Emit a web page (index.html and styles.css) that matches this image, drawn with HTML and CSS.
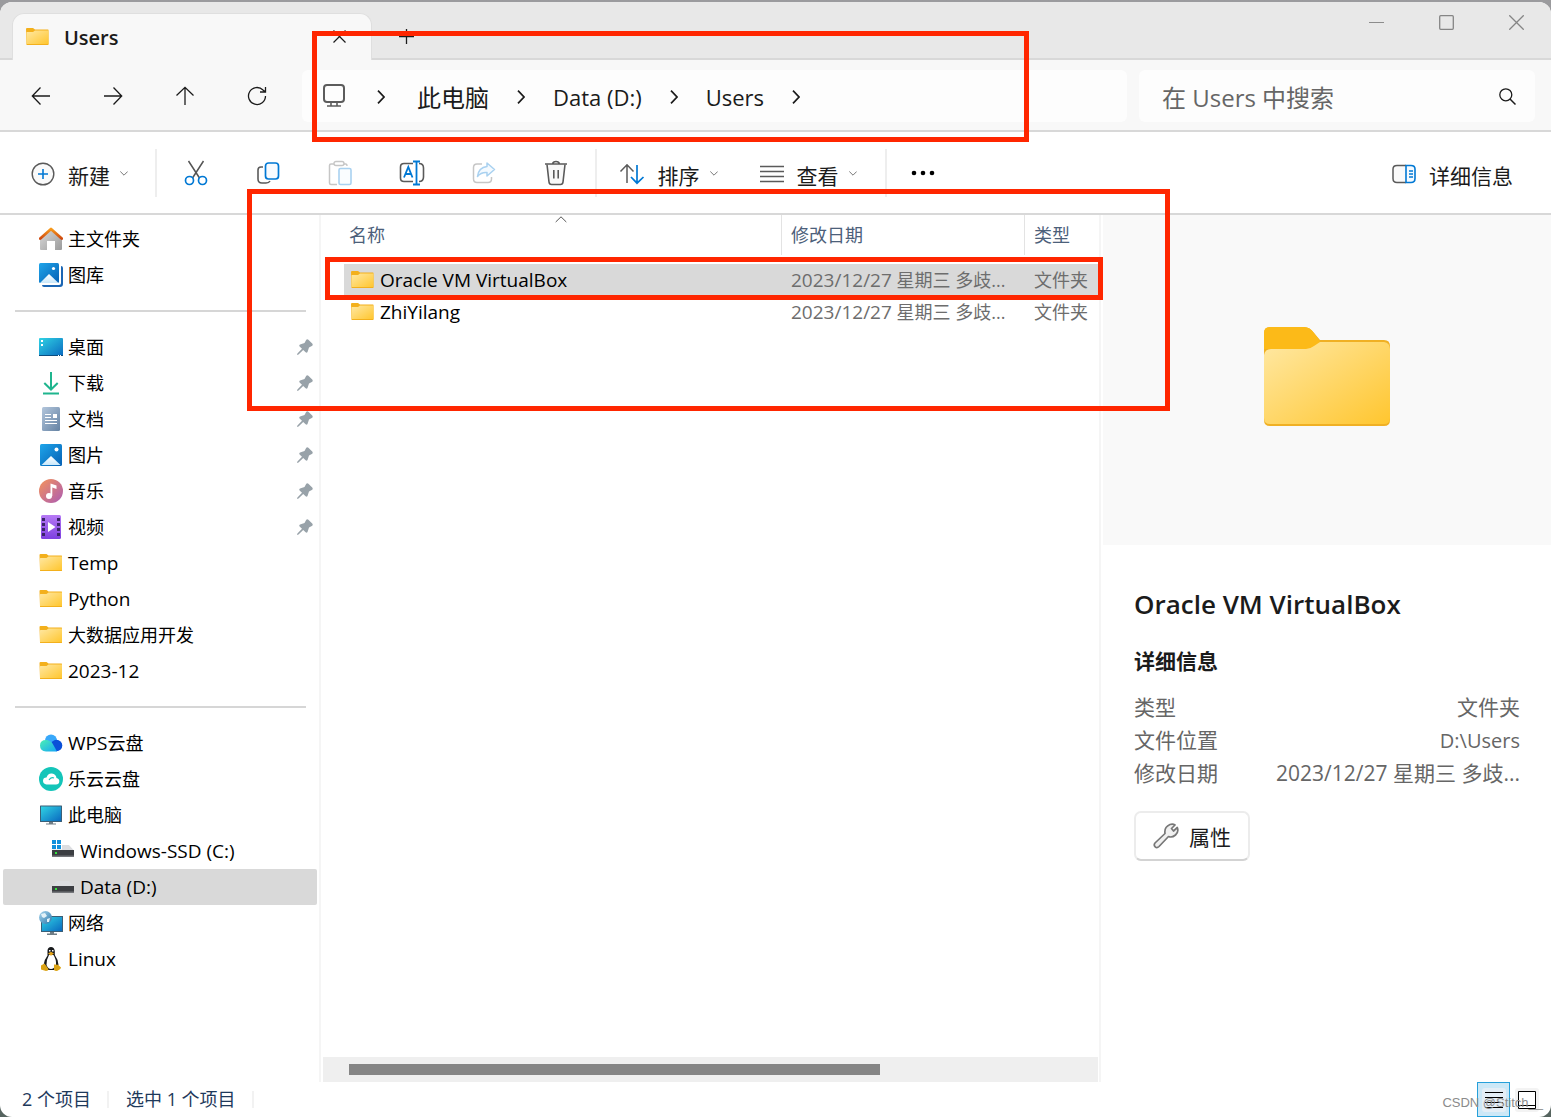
FILE: index.html
```html
<!DOCTYPE html>
<html lang="zh-CN">
<head>
<meta charset="utf-8">
<meta name="viewport" content="width=device-width, initial-scale=1">
<title>Users</title>
<link rel="stylesheet" href="styles.css">
</head>
<body>
<svg class="defs" width="0" height="0" aria-hidden="true">
  <defs>
    <linearGradient id="g-folder" x1="0" y1="0" x2="1" y2="1"><stop offset="0" stop-color="#ffe8a3"/><stop offset="1" stop-color="#ffc62f"/></linearGradient>
    <linearGradient id="g-blue" x1="0" y1="0" x2="1" y2="1"><stop offset="0" stop-color="#1fa5ea"/><stop offset="1" stop-color="#0560b4"/></linearGradient>
    <linearGradient id="g-screen" x1="0" y1="0" x2="1" y2="1"><stop offset="0" stop-color="#30d3e4"/><stop offset="1" stop-color="#0a6ac0"/></linearGradient>
    <linearGradient id="g-snow" x1="0" y1="0" x2="0" y2="1"><stop offset="0" stop-color="#fff"/><stop offset="1" stop-color="#c9e8fb"/></linearGradient>
    <linearGradient id="g-wall" x1="0" y1="0" x2="1" y2="1"><stop offset="0" stop-color="#dcdcdc"/><stop offset="1" stop-color="#9b9b9b"/></linearGradient>
    <linearGradient id="g-roof" x1="0" y1="0" x2="0" y2="1"><stop offset="0" stop-color="#f79a1c"/><stop offset="1" stop-color="#cf4a10"/></linearGradient>
    <linearGradient id="g-doc" x1="0" y1="0" x2="1" y2="1"><stop offset="0" stop-color="#b3c6dc"/><stop offset="1" stop-color="#6482a3"/></linearGradient>
    <linearGradient id="g-music" x1="0" y1="0" x2="1" y2="1"><stop offset="0" stop-color="#f5945a"/><stop offset="1" stop-color="#ab5bb4"/></linearGradient>
    <linearGradient id="g-video" x1="0" y1="0" x2="0" y2="1"><stop offset="0" stop-color="#b67af5"/><stop offset="1" stop-color="#7d3fe0"/></linearGradient>
    <linearGradient id="g-cloud" x1="0" y1="0" x2="1" y2="1"><stop offset="0" stop-color="#4bf0b4"/><stop offset="1" stop-color="#16a6f5"/></linearGradient>
    <linearGradient id="g-globe" x1="0" y1="0" x2="1" y2="1"><stop offset="0" stop-color="#a9d6ee"/><stop offset="1" stop-color="#2b78ab"/></linearGradient>
  </defs>
  <symbol id="folder" viewBox="0 0 23 17">
    <path d="M0 1Q0 0 1 0H7L9 1.500H22Q22.500 1.500 22.500 2V16.500Q22.500 17 22 17H1Q.5 17 .5 16.500Z" fill="#f3b01c"/>
    <path d="M.5 4.500Q.5 4 1 4H7L9 2.500H22.500V16H.5Z" fill="url(#g-folder)"/>
  </symbol>
  <symbol id="chev-right" viewBox="0 0 8 14"><path d="M1 .7 7 7 1 13.300" fill="none" stroke="#1b1b1b" stroke-width="1.700"/></symbol>
  <symbol id="chev-down" viewBox="0 0 8 5"><path d="M.3.5 4 4.200 7.700.5" fill="none" stroke="#777"/></symbol>
  <symbol id="pin" viewBox="0 0 16 16"><path d="M9 1.200Q10-.4 11.400.8L15.200 4.600Q16.400 6 14.800 7L12 8.500 10.500 13Q9.800 14.200 8.600 13.200L6.200 10.900 1.500 15.500 0 16 .4 14.400 5 9.700 2.600 7.400Q1.800 6.200 3 5.500L7.500 4Z" fill="#98a2a9"/></symbol>
  <symbol id="disk" viewBox="0 0 24 24">
    <path d="M6 6H18L22.500 11H1Z" fill="#dcdde0"/><path d="M1 11H23V17H1Z" fill="#3c3e42"/><path d="M1 16.500H23V18H1Z" fill="#75777b"/><path d="M4 13H6V15H4Z" fill="#32e43c"/>
  </symbol>
</svg>

<div class="window">
  <header class="titlebar">
    <div class="tab">
      <svg class="tab-icon" width="23" height="17"><use href="#folder"/></svg>
      <span class="tab-title">Users</span>
      <button class="tab-close" aria-label="关闭标签页"><svg width="13" height="13" viewBox="0 0 13 13"><path d="M.5.5 12.500 12.500M12.500.5.5 12.500" stroke="#1b1b1b" stroke-width="1.200"/></svg></button>
    </div>
    <button class="tab-new" aria-label="新建标签页"><svg width="15" height="15" viewBox="0 0 15 15"><path d="M7.500 0V15M0 7.500H15" stroke="#1b1b1b" stroke-width="1.300"/></svg></button>
    <div class="window-controls">
      <button aria-label="最小化"><svg width="15" height="15" viewBox="0 0 15 15"><path d="M0 7.500H15" stroke="#8c8c8c"/></svg></button>
      <button aria-label="最大化"><svg width="15" height="15" viewBox="0 0 15 15"><rect x=".7" y=".7" width="13.600" height="13.600" rx="1" fill="none" stroke="#858585" stroke-width="1.300"/></svg></button>
      <button aria-label="关闭"><svg width="15" height="15" viewBox="0 0 15 15"><path d="M.3.3 14.700 14.700M14.700.3.3 14.700" stroke="#858585" stroke-width="1.300"/></svg></button>
    </div>
  </header>

  <nav class="navbar">
    <div class="nav-buttons">
      <button aria-label="后退"><svg width="20" height="20" viewBox="0 0 20 20"><path d="M19 10H1.500M9.500 1.500 1.300 10 9.500 18.500"/></svg></button>
      <button aria-label="前进"><svg width="20" height="20" viewBox="0 0 20 20"><path d="M1 10H18.500M10.500 1.500 18.700 10 10.500 18.500"/></svg></button>
      <button aria-label="向上"><svg width="20" height="20" viewBox="0 0 20 20"><path d="M10 19V1.500M1.500 9.500 10 1.300 18.500 9.500"/></svg></button>
      <button aria-label="刷新"><svg width="20" height="20" viewBox="0 0 20 20"><path d="M18.500 10A8.500 8.500 0 1 1 16 4L18.500 6M18.500 1V6H13"/></svg></button>
    </div>
    <div class="address">
      <svg width="22" height="24" viewBox="0 0 22 24"><rect x="1" y="1" width="20" height="17" rx="3" fill="none" stroke="#5c5c5c" stroke-width="2"/><path d="M8 18V22M14 18V22M4 22H18" stroke="#5c5c5c" stroke-width="1.600"/></svg>
      <svg class="root-chevron" width="8" height="14"><use href="#chev-right"/></svg>
      <a href="#">此电脑</a>
      <svg class="chevron" width="8" height="14"><use href="#chev-right"/></svg>
      <a href="#" class="latin">Data (D:)</a>
      <svg class="chevron" width="8" height="14"><use href="#chev-right"/></svg>
      <a href="#" class="latin">Users</a>
      <svg class="chevron" width="8" height="14"><use href="#chev-right"/></svg>
    </div>
    <div class="search">
      <input type="text" aria-label="搜索" placeholder="在 Users 中搜索">
      <svg width="17" height="17" viewBox="0 0 17 17"><circle cx="6.800" cy="6.800" r="6" fill="none" stroke="#1b1b1b" stroke-width="1.300"/><path d="M11 11 16.500 16.500" stroke="#1b1b1b" stroke-width="1.500"/></svg>
    </div>
  </nav>

  <div class="toolbar">
    <button class="tool new">
      <svg width="24" height="24" viewBox="0 0 24 24"><circle cx="12" cy="12" r="10.800" fill="#fafafa" stroke="#5a5a5a" stroke-width="1.400"/><path d="M12 7V17M7 12H17" stroke="#0078d4" stroke-width="1.600"/></svg>
      <span>新建</span><svg class="caret" width="8" height="5"><use href="#chev-down"/></svg>
    </button>
    <div class="sep"></div>
    <div class="tool-icons">
      <button aria-label="剪切"><svg width="24" height="26" viewBox="0 0 24 26"><path d="M4.500 1 15.500 18M19.500 1 8.500 18" stroke="#555" stroke-width="1.500"/><circle cx="5.500" cy="20.500" r="4" fill="#fff" stroke="#0078d4" stroke-width="1.700"/><circle cx="18.500" cy="20.500" r="4" fill="#fff" stroke="#0078d4" stroke-width="1.700"/></svg></button>
      <button aria-label="复制"><svg width="24" height="24" viewBox="0 0 24 24"><path d="M7 6H5Q2 6 2 9V18Q2 22 6 22H10Q13 22 14 20" fill="none" stroke="#5a5a5a" stroke-width="1.600"/><rect x="9.500" y="2" width="13" height="16" rx="3" fill="#f8fbff" stroke="#0078d4" stroke-width="1.700"/></svg></button>
      <button aria-label="粘贴" disabled><svg width="24" height="26" viewBox="0 0 24 26"><path d="M6 4H3Q1.500 4 1.500 5.500V23Q1.500 24.500 3 24.500H9M16 4H18Q19 4 19 6" fill="none" stroke="#c6c6c6" stroke-width="1.500"/><rect x="6" y="1.500" width="10" height="4" rx="2" fill="#fff" stroke="#c6c6c6" stroke-width="1.400"/><rect x="11" y="8.500" width="12" height="16" rx="1.500" fill="#fafdff" stroke="#a9d1f0" stroke-width="1.600"/></svg></button>
      <button aria-label="重命名"><svg width="26" height="26" viewBox="0 0 26 26"><path d="M14 3.500H5Q1.500 3.500 1.500 7V18Q1.500 21.500 5 21.500H14M20 3.500Q24.500 3.500 24.500 8V17Q24.500 21.500 20 21.500" fill="none" stroke="#5a5a5a" stroke-width="1.600"/><path d="M5 17.500 9.300 7 13.500 17.500M6.500 14H12M17.500 1.500V24.500M14 1.500H21M14 24.500H21" fill="none" stroke="#0078d4" stroke-width="1.800"/></svg></button>
      <button aria-label="共享" disabled><svg width="24" height="24" viewBox="0 0 24 24"><path d="M10 3H5Q1.500 3 1.500 6.500V18Q1.500 21.500 5 21.500H16Q19.500 21.500 19.500 18V16" fill="none" stroke="#c6c6c6" stroke-width="1.500"/><path d="M15 2 22.500 8.500 15 15V11.500Q9 11 5.500 15.500 6.500 6.500 15 5.500Z" fill="#f4faff" stroke="#a9d1f0" stroke-width="1.500" stroke-linejoin="round"/></svg></button>
      <button aria-label="删除"><svg width="24" height="26" viewBox="0 0 24 26"><path d="M3 4.500 5 22Q5.300 24.500 7.500 24.500H16.500Q18.700 24.500 19 22L21 4.500" fill="#f8f8f8" stroke="#5a5a5a" stroke-width="1.600"/><path d="M1 4H23M8.500 4Q9 1.500 12 1.500T15.500 4M9.800 10V18.500M14.200 10V18.500" fill="none" stroke="#5a5a5a" stroke-width="1.600"/></svg></button>
    </div>
    <div class="sep"></div>
    <button class="tool menu">
      <svg width="26" height="22" viewBox="0 0 26 22"><path d="M8 20V2M1.500 8.500 8 1.800 14.500 8.500" fill="none" stroke="#5a5a5a" stroke-width="1.500"/><path d="M18 2V20M12 14 18 20.200 24.500 14" fill="none" stroke="#0078d4" stroke-width="1.700"/></svg>
      <span>排序</span><svg class="caret" width="8" height="5"><use href="#chev-down"/></svg>
    </button>
    <button class="tool menu">
      <svg width="24" height="18" viewBox="0 0 24 18"><path d="M0 1.500H24M0 6.500H24M0 11.500H24M0 16.500H24" stroke="#5a5a5a" stroke-width="1.500"/></svg>
      <span>查看</span><svg class="caret" width="8" height="5"><use href="#chev-down"/></svg>
    </button>
    <div class="sep"></div>
    <button class="more" aria-label="查看更多"><svg width="24" height="6" viewBox="0 0 24 6"><circle cx="3" cy="3" r="2.300"/><circle cx="12" cy="3" r="2.300"/><circle cx="21" cy="3" r="2.300"/></svg></button>
    <button class="tool details-toggle">
      <svg width="24" height="20" viewBox="0 0 24 20"><path d="M14 1.500H5Q1 1.500 1 5V14.500Q1 18.500 5 18.500H14" fill="#fafafa" stroke="#5a5a5a" stroke-width="1.500"/><path d="M14 1.500H19Q23 1.500 23 5V14.500Q23 18.500 19 18.500H14ZM17 7H21M17 10H21M17 13H21" fill="#f4faff" stroke="#0078d4" stroke-width="1.600"/></svg>
      <span>详细信息</span>
    </button>
  </div>

  <main class="main">
    <aside class="sidebar">
      <a class="side-item" href="#"><svg width="24" height="24" viewBox="0 0 24 24"><path d="M1 11 12 1.500 23 11V22Q23 23 22 23H16V14H8V23H2Q1 23 1 22Z" fill="url(#g-wall)"/><path d="M1.300 11.500 12 2 22.700 11.500" fill="none" stroke="url(#g-roof)" stroke-width="2.800" stroke-linecap="round" stroke-linejoin="round"/></svg><span>主文件夹</span></a>
      <a class="side-item" href="#"><svg width="24" height="24" viewBox="0 0 24 24"><path d="M22 3Q24 3 24 5V21Q24 24 21 24H5Q3 24 3 22H20Q22 22 22 20Z" fill="#1b66b4"/><rect width="20" height="20" y="0" rx="1.500" fill="url(#g-blue)"/><path d="M1 20 10 11 19.500 20Z" fill="url(#g-snow)"/><circle cx="14.500" cy="5.500" r="1.600" fill="#fff"/></svg><span>图库</span></a>
      <div class="side-divider"></div>
      <a class="side-item" href="#"><svg width="24" height="24" viewBox="0 0 24 24"><rect y="3" width="24" height="18" rx="1" fill="url(#g-screen)"/><path d="M0 20H24V21H0Z" fill="#0b4d80"/><path d="M2 5H4V7H2ZM2 9H4V11H2ZM19 20H20V21H19ZM21 20H22V21H21Z" fill="#fff"/></svg><span>桌面</span><svg class="pin" width="16" height="16"><use href="#pin"/></svg></a>
      <a class="side-item" href="#"><svg width="24" height="24" viewBox="0 0 24 24"><path d="M12 1V18M5.300 12 12 18.500 18.700 12M4 22.500H20" fill="none" stroke="#1fb58e" stroke-width="2"/></svg><span>下载</span><svg class="pin" width="16" height="16"><use href="#pin"/></svg></a>
      <a class="side-item" href="#"><svg width="24" height="24" viewBox="0 0 24 24"><rect x="3" width="18" height="24" rx="1.500" fill="url(#g-doc)"/><path d="M6 7.500H12M6 10.500H12M6 13.500H18M6 16.500H18" stroke="#fff"/><path d="M14 7H18V11H14Z" fill="#fff"/></svg><span>文档</span><svg class="pin" width="16" height="16"><use href="#pin"/></svg></a>
      <a class="side-item" href="#"><svg width="24" height="24" viewBox="0 0 24 24"><rect x="1" y="1" width="22" height="22" rx="1.500" fill="url(#g-blue)"/><path d="M2.500 22 12 13 21.500 22Z" fill="url(#g-snow)"/><circle cx="17.500" cy="6.500" r="2" fill="#fff"/></svg><span>图片</span><svg class="pin" width="16" height="16"><use href="#pin"/></svg></a>
      <a class="side-item" href="#"><svg width="24" height="24" viewBox="0 0 24 24"><circle cx="12" cy="12" r="12" fill="url(#g-music)"/><circle cx="10" cy="17" r="3" fill="#fff"/><path d="M11.500 17V4.500L17.500 6.500V10L13.300 8.600V17Z" fill="#fff"/></svg><span>音乐</span><svg class="pin" width="16" height="16"><use href="#pin"/></svg></a>
      <a class="side-item" href="#"><svg width="24" height="24" viewBox="0 0 24 24"><rect x="2" width="20" height="24" rx="1.500" fill="url(#g-video)"/><path d="M4.500 3V22M19.500 3V22" stroke="#3b2469" stroke-width="3" stroke-dasharray="3 2"/><path d="M9 7 16.500 12 9 17Z" fill="#fff"/></svg><span>视频</span><svg class="pin" width="16" height="16"><use href="#pin"/></svg></a>
      <a class="side-item" href="#"><svg class="side-folder" width="24" height="17"><use href="#folder"/></svg><span class="latin">Temp</span></a>
      <a class="side-item" href="#"><svg class="side-folder" width="24" height="17"><use href="#folder"/></svg><span class="latin">Python</span></a>
      <a class="side-item" href="#"><svg class="side-folder" width="24" height="17"><use href="#folder"/></svg><span>大数据应用开发</span></a>
      <a class="side-item" href="#"><svg class="side-folder" width="24" height="17"><use href="#folder"/></svg><span class="latin">2023-12</span></a>
      <div class="side-divider"></div>
      <a class="side-item" href="#"><svg width="24" height="24" viewBox="0 0 24 24"><circle cx="12" cy="9.500" r="6" fill="#38a8fa"/><circle cx="17.500" cy="14.500" r="5.800" fill="#0a50d8"/><path d="M7 20.500Q1 20 1 14.500T7 9Q11 9 13.500 12.500L18 20.500Z" fill="url(#g-cloud)"/></svg><span><span class="latin">WPS</span>云盘</span></a>
      <a class="side-item" href="#"><svg width="24" height="24" viewBox="0 0 24 24"><circle cx="12" cy="12" r="12" fill="#14c5b9"/><path d="M7.500 17.500Q4 17 4 13.800T7.500 10.500Q9 6 13 6.500T17.500 11Q20.500 11.500 20.300 14.500T17 17.500Z" fill="#fff"/><path d="M10 13Q12 9.500 15 11" fill="none" stroke="#14c5b9" stroke-width="1.200"/></svg><span>乐云云盘</span></a>
      <a class="side-item" href="#"><svg width="24" height="24" viewBox="0 0 24 24"><rect x="1" y="2.500" width="22" height="16.500" rx=".5" fill="#3b5f77"/><rect x="2" y="3.500" width="20" height="14.500" fill="url(#g-screen)"/><path d="M10 19H14V20.500H17V21.500H7V20.500H10Z" fill="#6f7d86"/></svg><span>此电脑</span></a>
      <a class="side-item nested" href="#"><svg width="24" height="24" viewBox="0 0 24 24"><use href="#disk"/><path d="M0 0H11V10.500H0Z" fill="#fff"/><path d="M1 1H5V5H1ZM6 1H10V5H6ZM1 6H5V10H1ZM6 6H10V10H6Z" fill="#1190dc"/></svg><span class="latin">Windows-SSD (C:)</span></a>
      <a class="side-item nested selected" href="#"><svg width="24" height="24"><use href="#disk"/></svg><span class="latin">Data (D:)</span></a>
      <a class="side-item" href="#"><svg width="24" height="24" viewBox="0 0 24 24"><rect x="2" y="5" width="22" height="16" fill="#3b5f77"/><rect x="3" y="6" width="20" height="14" fill="url(#g-screen)"/><path d="M11 21H15V22.500H18V24H8V22.500H11Z" fill="#6f7d86"/><circle cx="6.500" cy="6.500" r="6.500" fill="url(#g-globe)"/><path d="M2 3 6 2 8 5 5 7 3 6ZM8 8 11 7 10 11 8 11Z" fill="#e3f2f8"/></svg><span>网络</span></a>
      <a class="side-item" href="#"><svg width="24" height="24" viewBox="0 0 24 24"><path d="M8.500 3.500Q8.800 0 12 0T15.800 4V8Q19.500 13 19.500 18L17 23H7L4.500 18Q5 13 8.500 8.500Z" fill="#17191c"/><path d="M10 8H14.500Q17.500 13 17 17.500 15 22 12 22T7.500 18Q7.200 13 10 8Z" fill="#fff"/><path d="M9 6.500 12 4.800 15 6.500 12 8.800Z" fill="#e5a419"/><path d="M2 22.500V18.500L5.500 16.500 9.500 22Q9.500 24 7 24ZM15 23V17.500L19 17.800 22 20.500Q22 22 18 24Q15.500 24 15 23Z" fill="#dba315"/><path d="M10 3H11.500V4.500H10ZM13 3H14.500V4.500H13Z" fill="#fff"/></svg><span class="latin">Linux</span></a>
    </aside>

    <section class="files">
      <table class="file-table">
        <thead>
          <tr>
            <th class="col-name">名称<svg class="sort-mark" width="12" height="7" viewBox="0 0 12 7"><path d="M.7 6 6 .8 11.300 6" fill="none" stroke="#555"/></svg></th>
            <th class="col-date">修改日期</th>
            <th class="col-type">类型</th>
          </tr>
        </thead>
        <tbody>
          <tr class="selected">
            <td><div class="file-name"><svg width="23" height="17"><use href="#folder"/></svg><span class="latin">Oracle VM VirtualBox</span></div></td>
            <td><span class="latin">2023/12/27</span> 星期三 多歧...</td>
            <td>文件夹</td>
          </tr>
          <tr>
            <td><div class="file-name"><svg width="23" height="17"><use href="#folder"/></svg><span class="latin">ZhiYilang</span></div></td>
            <td><span class="latin">2023/12/27</span> 星期三 多歧...</td>
            <td>文件夹</td>
          </tr>
        </tbody>
      </table>
      <div class="scrollbar"><div class="thumb"></div></div>
    </section>

    <aside class="details">
      <div class="preview">
        <svg width="126" height="99" viewBox="0 0 126 99"><path d="M0 6Q0 0 6 0H40Q46 0 50 6L56 13H120Q126 13 126 19V93Q126 99 120 99H6Q0 99 0 93Z" fill="#f0b024"/><path d="M0 6Q0 0 6 0H40Q46 0 50 6L56 14 50 22H0Z" fill="#fcba18"/><path d="M0 28Q1 22 7 22H42Q46 22 50 19L56 15H120Q126 16 126 22V91Q126 97 120 97H6Q0 97 0 91Z" fill="url(#g-folder)"/></svg>
      </div>
      <div class="details-body">
        <h1>Oracle VM VirtualBox</h1>
        <h2>详细信息</h2>
        <dl>
          <div><dt>类型</dt><dd>文件夹</dd></div>
          <div><dt>文件位置</dt><dd class="latin">D:\Users</dd></div>
          <div><dt>修改日期</dt><dd>2023/12/27 星期三 多歧...</dd></div>
        </dl>
        <button class="properties"><svg width="26" height="26" viewBox="0 0 26 26"><path d="M17 1.500Q20 .6 22 2L18.500 5.500 20.500 8 24.300 4.500Q26 9 22.500 12T15.500 13.500L6 23.500Q4 25.500 2.200 23.800T2 20L12 10.500Q11 4 17 1.500Z" fill="#f0f0f0" stroke="#777" stroke-width="1.700" stroke-linejoin="round"/></svg><span>属性</span></button>
      </div>
    </aside>
  </main>

  <footer class="status">
    <span>2 个项目</span><i></i><span>选中 1 个项目</span><i></i>
    <div class="view-switch">
      <button class="active" aria-label="详细信息视图"><svg width="24" height="24" viewBox="0 0 24 24"><rect width="24" height="24" rx="3" fill="#e4eef6"/><path d="M3 4.500H21M3 9.500H21M3 14.500H21M3 19.500H21" stroke="#000"/></svg></button>
      <button aria-label="大缩略图视图"><svg width="24" height="24" viewBox="0 0 24 24"><rect width="24" height="24" rx="3" fill="#f3f3f3"/><path d="M3.500 3.500H20.500V20.500H3.500ZM3.500 17.500H20.500" fill="#fff" stroke="#000"/></svg></button>
    </div>
    <span class="watermark">CSDN @Stitch__</span>
  </footer>

  <div class="mark mark-address"></div>
  <div class="mark mark-list"></div>
  <div class="mark mark-row"></div>
</div>
</body>
</html>
```
FILE: styles.css
```css
* { box-sizing: border-box; }

html { background: linear-gradient(#9b9b9e, #56645f); }

body {
  margin: 0;
  padding-top: 2px;
  min-height: 100vh;
  font-family: "Open Sans", "Noto Sans CJK SC", sans-serif;
  font-size: 18px;
  color: #000;
}

.defs { position: absolute; }

svg { display: block; flex: none; }

a { color: inherit; text-decoration: none; }

button {
  display: flex;
  align-items: center;
  justify-content: center;
  padding: 0;
  border: 0;
  background: none;
  font: inherit;
  color: inherit;
}

.window {
  position: relative;
  display: flex;
  flex-direction: column;
  min-height: calc(100vh - 2px);
  border-radius: 12px;
  overflow: hidden;
  background: #fff;
}

/* Title bar */
.titlebar {
  display: flex;
  height: 58px;
  padding-left: 12px;
  background: #e8e8e8;
  border-bottom: 2px solid #d8d8d8;
}

.tab {
  display: flex;
  align-items: center;
  width: 360px;
  height: 47px;
  margin-top: 11px;
  padding: 0 16px 2px 13px;
  border: 1px solid #dfdfdf;
  border-width: 1px 1px 0;
  border-radius: 12px 12px 0 0;
  background: #f8f8f8;
}

.tab-icon { margin-right: 15px; }
.tab-title { flex: 1; padding-top: 2px; font-size: 20px; font-weight: 600; color: #1b1b1b; }
.tab-close { width: 32px; height: 32px; }
.tab-new { width: 68px; height: 68px; }

.window-controls { display: flex; margin-left: auto; }
.window-controls button { width: 70px; height: 40px; }

/* Navigation row */
.navbar {
  display: flex;
  align-items: center;
  height: 72px;
  padding: 2px 16px 0 5px;
  background: #f8f8f8;
  border-bottom: 2px solid #d8d8d8;
}

.nav-buttons { display: flex; margin-right: 9px; }
.nav-buttons button { width: 72px; height: 52px; }
.nav-buttons path { fill: none; stroke: #1b1b1b; stroke-width: 1.3; }

.address, .search {
  display: flex;
  align-items: center;
  height: 52px;
  border-radius: 6px;
  background: #fdfdfd;
}

.address {
  flex: 1;
  gap: 28px;
  margin-right: 12px;
  padding-left: 21px;
  font-size: 24px;
  color: #1b1b1b;
  white-space: nowrap;
}

.address .latin { padding-top: 2px; font-size: 22px; }
.chevron, .root-chevron { margin-top: 2px; }
.root-chevron { margin-right: 4px; margin-left: 4px; }

.search { width: 396px; padding: 0 19px 0 23px; }

.search input {
  flex: 1;
  min-width: 0;
  padding: 2px 0 0;
  border: 0;
  outline: 0;
  background: none;
  font: inherit;
  font-size: 24px;
}

.search input::placeholder { color: #666; opacity: 1; }

/* Command bar */
.toolbar {
  display: flex;
  align-items: center;
  height: 83px;
  padding: 0 38px 0 31px;
  border-bottom: 2px solid #d8d8d8;
  font-size: 21px;
  color: #1b1b1b;
}

.tool { gap: 13px; padding-top: 2px; white-space: nowrap; }
.tool span { padding-top: 2px; }
.tool .caret { margin-left: -3px; }
.new { margin-right: 27px; }
.sep { width: 2px; height: 48px; background: #eee; }
.tool-icons { display: flex; margin: 0 3px; }
.tool-icons button { width: 72px; height: 48px; }
.menu { width: 118px; margin-left: 12px; }
.menu + .menu { margin: 0 18px 0 22px; width: 118px; }
.more { width: 72px; height: 48px; }
.details-toggle { margin-left: auto; }

/* Three-pane area */
.main { display: flex; flex: 1; }

.sidebar {
  width: 321px;
  padding: 6px 2px 0 3px;
  border-right: 2px solid #f5f5f5;
}

.side-item {
  display: flex;
  align-items: center;
  gap: 5px;
  height: 36px;
  padding: 0 4px 0 36px;
  border-radius: 2px;
  white-space: nowrap;
}

.side-item.nested { padding-left: 48px; }
.side-item.selected { background: #d9d9d9; }
.side-item .latin, .file-table .latin { font-size: 19px; }
.side-item > span:not(.latin) { padding-bottom: 2px; }
.side-folder { margin-bottom: 2px; }
.pin { margin-left: auto; }

.side-divider { height: 36px; padding: 17px 11px 0 12px; }
.side-divider::before { content: ""; display: block; height: 2px; background: #d6d6d6; }

.files {
  display: flex;
  flex: 1;
  flex-direction: column;
  min-width: 0;
  border-right: 2px solid #f5f5f5;
}

.file-table {
  margin: 0 1px 0 23px;
  border-collapse: separate;
  border-spacing: 0;
  table-layout: fixed;
}

.file-table th {
  height: 40px;
  padding: 0 0 2px 9px;
  border-left: 1px solid #e3e3e3;
  font-weight: 400;
  text-align: left;
  color: #4c607a;
}

.file-table .col-name { position: relative; padding-left: 5px; border-left: 0; }
.col-date { width: 243px; }
.col-type { width: 74px; }

.sort-mark { position: absolute; top: 1px; left: calc(50% - 8px); }

.file-table tbody::before { content: ""; display: block; height: 9px; }

.file-table td {
  height: 32px;
  padding: 0 0 0 10px;
  line-height: 30px;
  white-space: nowrap;
  color: #6d6d6d;
}

.file-table td:first-child { padding-left: 7px; color: #000; }
.file-table .selected td { background: #d9d9d9; }
.file-name { display: flex; align-items: center; gap: 6px; }
.file-name svg { margin-bottom: 2px; }

.scrollbar {
  height: 25px;
  margin: auto 1px 0 2px;
  padding: 7px 26px;
  background: #efefef;
}

.thumb { width: 73.4%; height: 11px; background: #858585; }

/* Details pane */
.details { width: 448px; margin-left: 2px; }

.preview {
  display: flex;
  align-items: center;
  justify-content: center;
  height: 330px;
  padding-bottom: 7px;
  background: #f9f9f9;
}

.details-body { padding: 41px 31px 0; font-size: 21px; }
.details-body h1 { margin: 0 0 25px; font-size: 26px; font-weight: 600; line-height: 36px; color: #1b1b1b; }
.details-body h2 { margin: 0 0 16px; font-size: 21px; line-height: 28px; color: #1b1b1b; }
.details-body dl { margin: 0 0 21px; line-height: 33px; color: #666; }
.details-body dl div { display: flex; justify-content: space-between; }
.details-body dd { margin: 0; }
.details-body .latin { font-size: 20px; }

.properties {
  gap: 10px;
  width: 116px;
  height: 50px;
  border: 2px solid #ececec;
  border-bottom-color: #d3d3d3;
  border-radius: 7px;
  color: #1b1b1b;
}

/* Status bar */
.status {
  position: relative;
  display: flex;
  align-items: center;
  height: 35px;
  padding: 0 8px 0 22px;
  color: #1e395b;
}

.status > span:not(.watermark) { padding-bottom: 4px; }
.status i { width: 2px; height: 17px; margin: 0 17px 0 16px; background: #f2f2f2; }
.view-switch { display: flex; margin-left: auto; }
.view-switch button { width: 33px; height: 35px; }
.view-switch .active { border: 1px solid #26a0da; background: #cce8f7; }

.watermark {
  position: absolute;
  right: 8px;
  bottom: 5px;
  font-family: "Liberation Sans", sans-serif;
  font-size: 13px;
  line-height: 18px;
  color: #8b8b8b;
}

/* Annotation frames drawn over the window */
.mark { position: absolute; border: 5px solid #ff2600; pointer-events: none; }
.mark-address { left: 312px; top: 29px; width: 717px; height: 111px; }
.mark-list { left: 247px; top: 187px; width: 923px; height: 222px; }
.mark-row { left: 325px; top: 255px; width: 778px; height: 43px; }
```
